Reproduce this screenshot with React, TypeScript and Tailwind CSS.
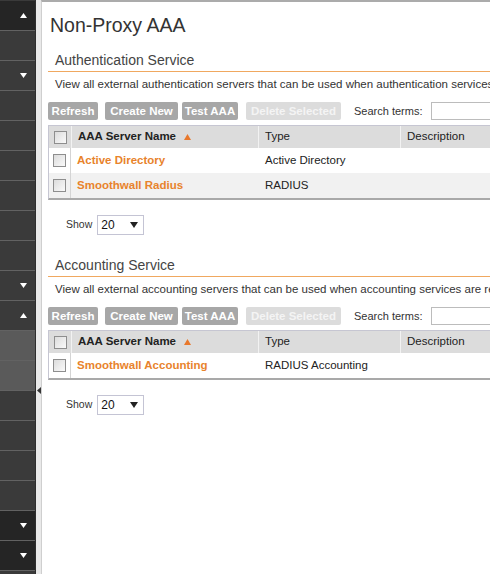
import React from "react";

type Tone = "dark" | "mid" | "light";
type Arrow = "up" | "down" | null;

const sideRows: { tone: Tone; arrow: Arrow }[] = [
  { tone: "dark", arrow: "up" },
  { tone: "mid", arrow: null },
  { tone: "mid", arrow: "down" },
  { tone: "mid", arrow: null },
  { tone: "mid", arrow: null },
  { tone: "mid", arrow: null },
  { tone: "mid", arrow: null },
  { tone: "mid", arrow: null },
  { tone: "mid", arrow: null },
  { tone: "mid", arrow: "down" },
  { tone: "mid", arrow: "up" },
  { tone: "light", arrow: null },
  { tone: "light", arrow: null },
  { tone: "mid", arrow: null },
  { tone: "mid", arrow: null },
  { tone: "mid", arrow: null },
  { tone: "mid", arrow: null },
  { tone: "dark", arrow: "down" },
  { tone: "dark", arrow: "down" },
];

const toneClass: Record<Tone, string> = {
  dark: "bg-[#252525]",
  mid: "bg-[#3a3a3a]",
  light: "bg-[#5a5a5a]",
};

function Triangle({ dir }: { dir: "up" | "down" }) {
  return (
    <svg width="7" height="5" viewBox="0 0 7 5">
      <path d={dir === "up" ? "M3.5 0L7 5H0z" : "M0 0h7L3.5 5z"} fill="#fff" />
    </svg>
  );
}

function Sidebar() {
  return (
    <aside className="w-[35px] shrink-0 bg-[#3a3a3a] pt-px flex flex-col">
      {sideRows.map((r, i) => (
        <div
          key={i}
          className={`h-[30px] shrink-0 border-b border-[#626262] flex items-center justify-end pr-[8px] ${toneClass[r.tone]}`}
        >
          {r.arrow && <Triangle dir={r.arrow} />}
        </div>
      ))}
    </aside>
  );
}

function Checkbox() {
  return (
    <span className="block w-[13px] h-[13px] border border-[#8e8e8e] bg-gradient-to-br from-[#dcdcdc] to-[#fafafa]" />
  );
}

function Toolbar() {
  const btn = "h-[18px] rounded-[2px] text-[11.5px] font-bold leading-[18px] text-center";
  return (
    <div className="flex items-center mt-[11px]">
      <button className={`${btn} w-[50px] bg-[#a7a7a7] text-white`}>Refresh</button>
      <button className={`${btn} w-[73px] ml-[7px] bg-[#a7a7a7] text-white`}>Create New</button>
      <button className={`${btn} w-[56px] ml-[4px] bg-[#a7a7a7] text-white`}>Test AAA</button>
      <button className={`${btn} w-[95px] ml-[8px] bg-[#dcdcdc] text-[#f4f4f4]`}>Delete Selected</button>
      <span className="ml-[13px] text-[11px] text-[#333]">Search terms:</span>
      <input className="ml-[9px] w-[200px] h-[18px] border border-[#bcbcbc] bg-white" />
    </div>
  );
}

type Row = { name: string; type: string };

function ServerTable({ rows }: { rows: Row[] }) {
  return (
    <div className="mt-[5px] w-[680px] border border-[#c6c6d2] border-b-2 border-b-[#a9a9a9]">
      <div className="flex h-[22px] bg-[#dcdcdc] text-[11.5px] text-[#222]">
        <div className="w-[22px] flex items-center justify-center">
          <Checkbox />
        </div>
        <div className="w-[187px] border-l border-[#f2f2f2] flex items-center pl-[6px] font-bold">
          AAA Server Name
          <svg className="ml-[8px]" width="7" height="6" viewBox="0 0 7 6">
            <path d="M3.5 0L7 6H0z" fill="#e8782c" />
          </svg>
        </div>
        <div className="w-[142px] border-l border-[#f2f2f2] flex items-center pl-[6px]">Type</div>
        <div className="flex-1 border-l border-[#f2f2f2] flex items-center pl-[6px]">Description</div>
      </div>
      {rows.map((r, i) => (
        <div
          key={r.name}
          className={`flex h-[25px] text-[11.5px] ${i % 2 === 1 ? "bg-[#f1f1f1]" : "bg-white"}`}
        >
          <div className="w-[22px] border-r border-[#d4d4d4] flex items-center justify-center">
            <Checkbox />
          </div>
          <div className="w-[187px] flex items-center pl-[6px] font-bold text-[#e8832c]">{r.name}</div>
          <div className="w-[142px] flex items-center pl-[7px] text-[#222]">{r.type}</div>
          <div className="flex-1" />
        </div>
      ))}
    </div>
  );
}

function ShowSelect() {
  return (
    <div className="mt-[15px] ml-[18px] flex items-center text-[10.5px] text-[#333]">
      <span>Show</span>
      <div className="ml-[5px] w-[47px] h-[20px] border border-[#c4c4d4] bg-white flex items-center justify-between pl-[3px] pr-[5px]">
        <span className="text-[12px] text-[#111]">20</span>
        <svg width="8" height="6" viewBox="0 0 8 6">
          <path d="M0 0h8L4 6z" fill="#222" />
        </svg>
      </div>
    </div>
  );
}

function Section({ title, desc, rows, first }: { title: string; desc: string; rows: Row[]; first?: boolean }) {
  return (
    <section className={first ? "mt-[14px]" : "mt-[21px]"}>
      <h2 className="pl-[7px] pb-[2px] text-[14px] leading-[18px] text-[#444] border-b border-[#f0a860]">{title}</h2>
      <p className="mt-[5px] pl-[7px] text-[11.5px] leading-[14px] text-[#333] whitespace-nowrap">{desc}</p>
      <Toolbar />
      <ServerTable rows={rows} />
      <ShowSelect />
    </section>
  );
}

export default function App() {
  return (
    <div className="flex w-[490px] h-[574px] overflow-hidden bg-white font-['Liberation_Sans',Arial,sans-serif]">
      <Sidebar />
      <div className="relative w-[6px] shrink-0 bg-[#e9e9e9] border-l border-[#2e2e2e]">
        <svg className="absolute left-[1px] top-[387px]" width="4" height="7" viewBox="0 0 4 7">
          <path d="M4 0v7L0 3.5z" fill="#333" />
        </svg>
      </div>
      <main className="flex-1 min-w-0 overflow-hidden border-l border-t-2 border-l-[#cfcfcf] border-t-[#ababab]">
        <div className="w-[720px] pl-[6px]">
          <h1 className="pt-[11px] pl-[2px] text-[19.5px] leading-[24px] text-[#333]">Non-Proxy AAA</h1>
          <Section
            first
            title="Authentication Service"
            desc="View all external authentication servers that can be used when authentication services are required."
            rows={[
              { name: "Active Directory", type: "Active Directory" },
              { name: "Smoothwall Radius", type: "RADIUS" },
            ]}
          />
          <Section
            title="Accounting Service"
            desc="View all external accounting servers that can be used when accounting services are required."
            rows={[{ name: "Smoothwall Accounting", type: "RADIUS Accounting" }]}
          />
        </div>
      </main>
    </div>
  );
}
